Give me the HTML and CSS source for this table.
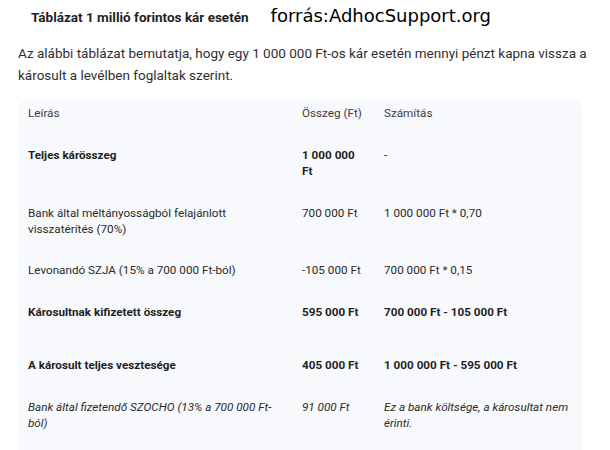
FILE: index.html
```html
<!DOCTYPE html>
<html lang="hu">
<head>
<meta charset="utf-8">
<link rel="stylesheet" href="styles.css">
</head>
<body>
<div class="top">
  <h2 class="title">Táblázat 1 millió forintos kár esetén</h2>
  <span class="source">forrás:AdhocSupport.org</span>
</div>
<p class="intro">Az alábbi táblázat bemutatja, hogy egy 1&nbsp;000&nbsp;000 Ft-os kár esetén mennyi pénzt kapna vissza a károsult a levélben foglaltak szerint.</p>
<div class="card">
<table class="tbl">
  <colgroup><col class="c1"><col class="c2"><col class="c3"></colgroup>
  <thead>
    <tr><th>Leírás</th><th>Összeg (Ft)</th><th>Számítás</th></tr>
  </thead>
  <tbody>
    <tr class="b"><td>Teljes kárösszeg</td><td>1&nbsp;000&nbsp;000 Ft</td><td class="n">-</td></tr>
    <tr><td>Bank által méltányosságból felajánlott visszatérítés (70%)</td><td>700&nbsp;000 Ft</td><td>1&nbsp;000&nbsp;000 Ft * 0,70</td></tr>
    <tr><td>Levonandó SZJA (15% a 700&nbsp;000 Ft-ból)</td><td>-105&nbsp;000 Ft</td><td>700&nbsp;000 Ft * 0,15</td></tr>
    <tr class="b tall"><td>Károsultnak kifizetett összeg</td><td>595&nbsp;000 Ft</td><td>700&nbsp;000 Ft - 105&nbsp;000 Ft</td></tr>
    <tr class="b"><td>A károsult teljes vesztesége</td><td>405&nbsp;000 Ft</td><td>1&nbsp;000&nbsp;000 Ft - 595&nbsp;000 Ft</td></tr>
    <tr class="i"><td>Bank által fizetendő SZOCHO (13% a 700&nbsp;000 Ft-ból)</td><td>91&nbsp;000 Ft</td><td>Ez a bank költsége, a károsultat nem érinti.</td></tr>
  </tbody>
</table>
</div>
</body>
</html>
```
FILE: styles.css
```css
html, body {
  margin: 0;
  padding: 0;
  background: #ffffff;
}
body {
  font-family: Roboto, "Noto Sans", sans-serif;
  color: #1f1f1f;
  width: 610px;
  height: 450px;
  overflow: hidden;
}
.top {
  display: flex;
  align-items: baseline;
  padding: 5px 0 0 31px;
  gap: 22px;
  line-height: 22px;
}
.title {
  margin: 0;
  font-size: 13.5px;
  font-weight: 700;
  color: #1f1f1f;
}
.source {
  font-family: "DejaVu Sans", sans-serif;
  font-size: 18px;
  color: #000;
}
.intro {
  margin: 14px 0 0 18px;
  width: 580px;
  font-size: 13.5px;
  line-height: 22px;
  color: #2f2f2f;
}
.card {
  margin: 13px 0 0 18px;
  width: 565px;
  background: #f8f9fc;
  border-radius: 12px;
  padding-bottom: 20px;
}
.tbl {
  width: 100%;
  border-collapse: collapse;
  table-layout: fixed;
  font-size: 11.7px;
  line-height: 16px;
  color: #2a2a2a;
}
.c1 { width: 284px; }
.c2 { width: 82px; }
.tbl th {
  font-weight: 400;
  text-align: left;
  padding: 6px 12px 13px 0;
  color: #3c3c3c;
  vertical-align: top;
}
.tbl td {
  padding: 13px 12px 13px 0;
  vertical-align: top;
}
.tbl tbody tr:nth-child(2) td { padding-bottom: 12px; }
.tbl th:nth-child(2), .tbl td:nth-child(2) { padding-right: 20px; }
.tbl th:last-child, .tbl td:last-child { padding-right: 8px; }
.tbl th:first-child, .tbl td:first-child {
  padding-left: 10px;
}
.tbl tr.b td {
  font-weight: 700;
  color: #1f1f1f;
}
.tbl tr.b td.n { font-weight: 400; }
.tbl tr.tall td { padding-bottom: 24px; }
.tbl tr.i td { font-style: italic; }
```
